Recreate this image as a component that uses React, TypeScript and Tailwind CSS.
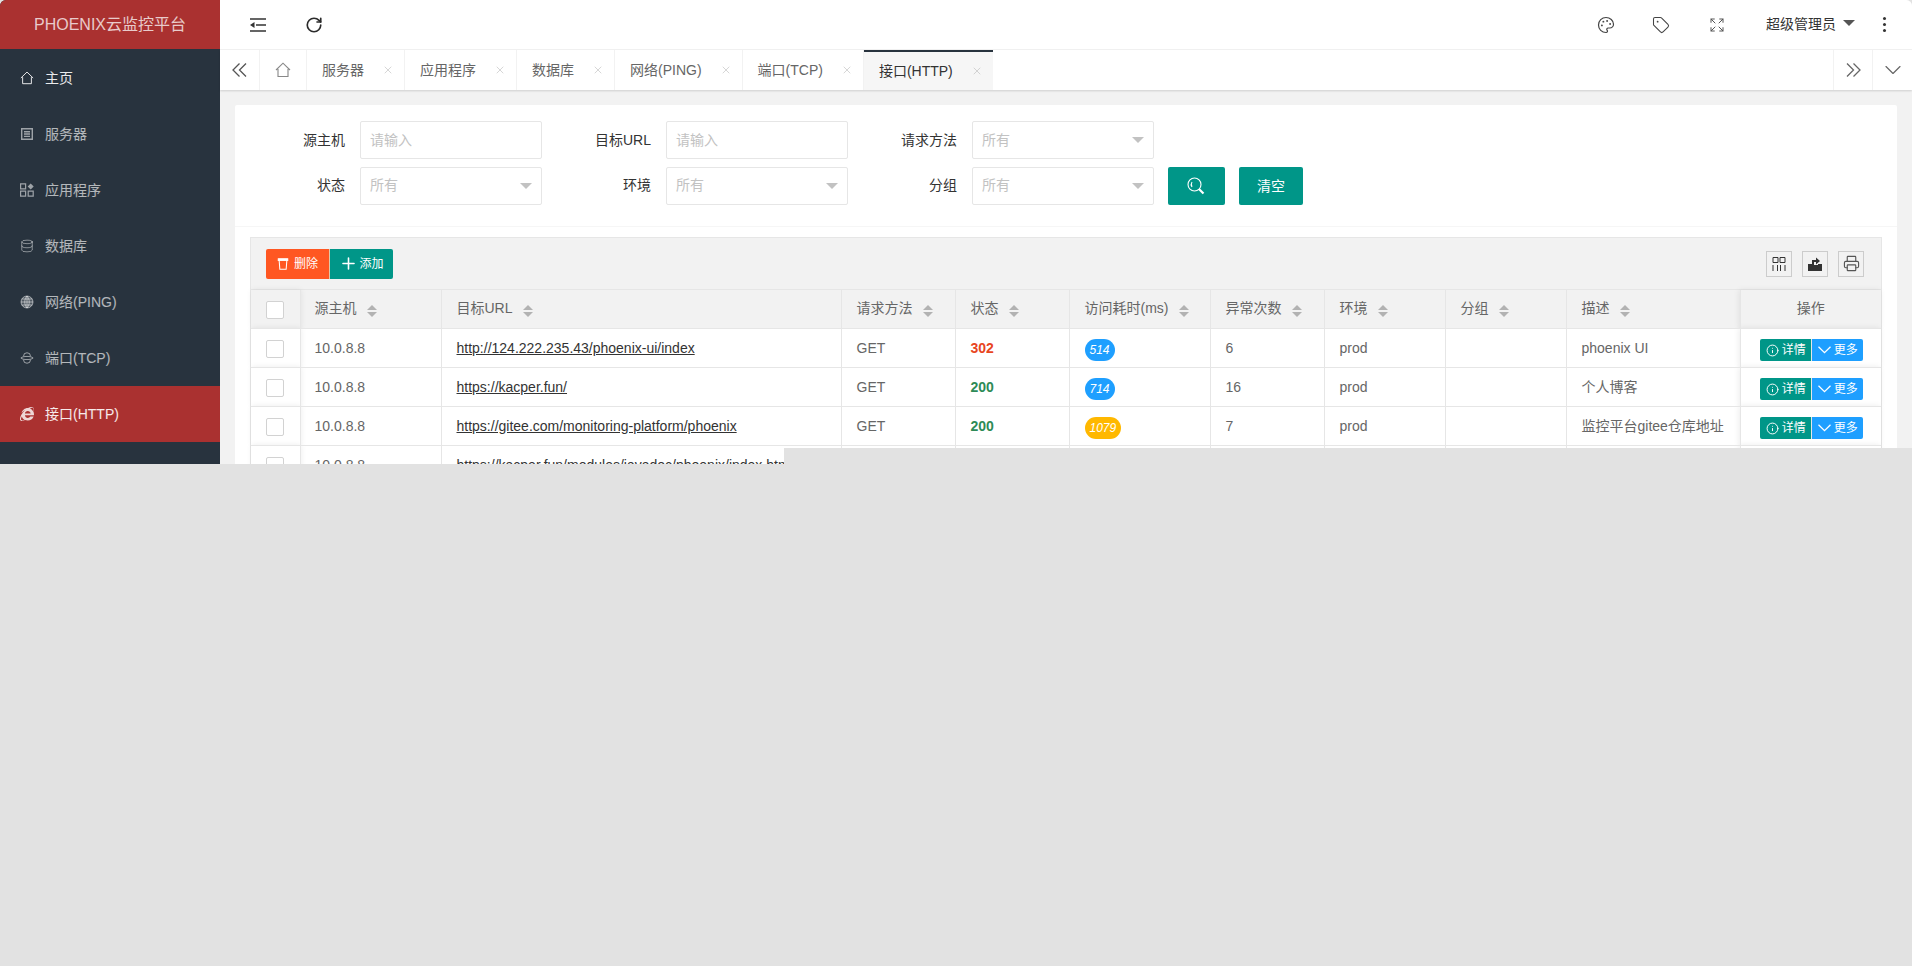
import { ChevronDown, Database, Expand, Info, Palette, Plus, Printer, RotateCw, Tag, X } from 'lucide-react'
import { FaInternetExplorer } from 'react-icons/fa'

const font = "font-['Liberation_Sans','Noto_Sans_CJK_SC',sans-serif]"

const HomeIcon = ({ className = '' }: { className?: string }) => (
  <svg viewBox="0 0 16 16" fill="none" stroke="currentColor" strokeWidth="1.1" className={className}>
    <path d="M1 8 8 1.2 15 8M3 7v7.5h10V7" />
  </svg>
)

const ServerIcon = () => (
  <svg viewBox="0 0 14 14" fill="none" stroke="currentColor" strokeWidth="1.4" className="h-[14px] w-[14px]">
    <path d="M1.7 1.7h10.6v10.6H1.7zM4 4.7h6M4 7h6M4 9.4h6" />
  </svg>
)

const AppIcon = () => (
  <svg viewBox="0 0 14 14" fill="none" stroke="currentColor" strokeWidth="1.2" className="h-[14px] w-[14px]">
    <path d="M.6.9h5v5h-5zM.6 8.2h5v5h-5zM8.2 8.2h5v5h-5z" />
    <path d="m10.7.4 3 3-3 3-3-3z" fill="currentColor" stroke="none" />
  </svg>
)

const GlobeIcon = () => (
  <svg viewBox="0 0 14 14" fill="none" stroke="currentColor" strokeWidth="0.9" className="h-[14px] w-[14px]">
    <circle cx="7" cy="7" r="6" fill="currentColor" fillOpacity="0.35" />
    <path d="M1 7h12M1.8 4h10.4M1.8 10h10.4M7 1v12M7 1C4 4 4 10 7 13M7 1c3 3 3 9 0 12" />
  </svg>
)

const PortIcon = () => (
  <svg viewBox="0 0 16 16" fill="none" stroke="currentColor" strokeWidth="1.1" className="h-[14px] w-[14px]">
    <path d="M4 6a4 4 0 0 1 8 0M4 10a4 4 0 0 0 8 0M1 8c2-2.400 12-2.400 14 0-2 2.400-12 2.400-14 0Z" />
  </svg>
)

const IndentIcon = () => (
  <svg viewBox="0 0 16 14" fill="none" stroke="#333" strokeWidth="1.6" className="h-[14px] w-[16px]">
    <path d="M0 1h16M0 13h16M6 7h10" />
    <path d="M4.500 4v6L0 7z" fill="#333" stroke="none" />
  </svg>
)

const SearchIcon = () => (
  <svg viewBox="0 0 18 18" fill="none" stroke="white" strokeWidth="1.1" className="-ml-[2px] h-[18px] w-[18px]">
    <circle cx="7.500" cy="7.500" r="6.500" />
    <path d="M5 5c-1 1.500-1 3.500 0 5" />
    <path d="m12 12 4.500 4.500" strokeWidth="2.200" />
  </svg>
)

const TrashIcon = () => (
  <svg viewBox="0 0 14 14" fill="none" stroke="white" strokeWidth="1.200" className="h-[12px] w-[12px]">
    <path d="M1 2.500h12M2.500 2.500l.8 10.500h7.400l.8-10.500" />
    <path d="M1.500.8h11v1.700h-11z" fill="white" />
  </svg>
)

const ColsIcon = () => (
  <svg viewBox="0 0 14 14" fill="none" stroke="#333" strokeWidth="1" className="h-[14px] w-[14px]">
    <path d="M1 .5h5v5H1zM8 .5h5v5H8zM1 8v6M5.500 8v6M8.500 8v6M13 8v6" />
  </svg>
)

const ExportIcon = () => (
  <svg viewBox="0 0 14 14" className="h-[14px] w-[14px]" fill="#333">
    <path d="M0 7h4v1h6V7h4v7H0z" />
    <path d="M4 3h4V.500L12 4 8 7.500V5H6v3H4z" />
  </svg>
)

const DoubleLeft = () => (
  <svg viewBox="0 0 15 14" fill="none" stroke="#555" strokeWidth="1.3" className="h-[14px] w-[15px]">
    <path d="M7.500.5 1 7l6.500 6.500M14 .5 7.500 7l6.500 6.500" />
  </svg>
)

const DoubleRight = () => (
  <svg viewBox="0 0 15 14" fill="none" stroke="#666" strokeWidth="1.3" className="h-[14px] w-[15px]">
    <path d="M1 .5 7.500 7 1 13.500M7.500.5 14 7l-6.500 6.500" />
  </svg>
)

const SmallChevron = () => (
  <svg viewBox="0 0 13 8" fill="none" stroke="white" strokeWidth="1.300" className="h-[8px] w-[13px]">
    <path d="m.5.700 6 6 6-6" />
  </svg>
)

const menus = [
  { label: '主页', icon: <HomeIcon className="h-[14px] w-[14px]" />, home: true },
  { label: '服务器', icon: <ServerIcon /> },
  { label: '应用程序', icon: <AppIcon /> },
  { label: '数据库', icon: <Database size={14} strokeWidth={1.4} /> },
  { label: '网络(PING)', icon: <GlobeIcon /> },
  { label: '端口(TCP)', icon: <PortIcon /> },
  { label: '接口(HTTP)', icon: <FaInternetExplorer size={14} />, active: true },
]

const tabs = ['服务器', '应用程序', '数据库', '网络(PING)', '端口(TCP)', '接口(HTTP)']

const columns = [
  { title: '源主机', width: 141 },
  { title: '目标URL', width: 400 },
  { title: '请求方法', width: 114 },
  { title: '状态', width: 114 },
  { title: '访问耗时(ms)', width: 141 },
  { title: '异常次数', width: 114 },
  { title: '环境', width: 121 },
  { title: '分组', width: 121 },
  { title: '描述', width: 174 },
]

const rows = [
  { url: 'http://124.222.235.43/phoenix-ui/index', status: '302', time: '514', errors: '6', desc: 'phoenix UI' },
  { url: 'https://kacper.fun/', status: '200', time: '714', errors: '16', desc: '个人博客' },
  { url: 'https://gitee.com/monitoring-platform/phoenix', status: '200', time: '1079', errors: '7', desc: '监控平台gitee仓库地址' },
  { url: 'https://kacper.fun/modules/javadoc/phoenix/index.html', status: '200', time: '514', errors: '3', desc: 'Javadoc' },
]

const Caret = () => <span className="h-0 w-0 border-x-[6px] border-t-[6px] border-x-transparent border-t-[#c2c2c2]" />

const Sort = () => (
  <span className="ml-[10px] inline-flex translate-y-[1px] flex-col gap-[2px] align-middle">
    <span className="h-0 w-0 border-x-[5px] border-b-[5px] border-x-transparent border-b-[#b2b2b2]" />
    <span className="h-0 w-0 border-x-[5px] border-t-[5px] border-x-transparent border-t-[#b2b2b2]" />
  </span>
)

const Check = () => <span className="block h-[18px] w-[18px] translate-y-[1px] rounded-[2px] border border-[#d2d2d2] bg-white" />

const Field = ({ label, text, select }: { label: string; text: string; select?: boolean }) => (
  <div className="flex w-[306px] flex-none items-center">
    <label className="w-[125px] flex-none pr-[15px] text-right text-[#333]">{label}</label>
    <div className="flex h-[38px] w-[182px] flex-none items-center justify-between rounded-[2px] border border-[#e6e6e6] bg-white pl-[9px] pr-[9px] text-[#c2c2c2]">
      {text}
      {select && <Caret />}
    </div>
  </div>
)

const ToolBtn = ({ children }: { children: React.ReactNode }) => (
  <span className="flex h-[26px] w-[26px] items-center justify-center border border-[#ccc]">{children}</span>
)

export default function App() {
  return (
    <div className={`relative h-[966px] overflow-hidden bg-[#e2e2e2] text-[14px] ${font}`}>
      <div className="flex h-[464px] overflow-hidden rounded-t-[6px] bg-[#f2f2f2]">
        {/* Sidebar */}
        <aside className="w-[220px] flex-none bg-[#28333e]">
          <div className="flex h-[49px] items-center justify-center bg-[#aa3130] text-[16px] text-white/75">PHOENIX云监控平台</div>
          <nav className="pt-px">
            {menus.map(m => (
              <div
                key={m.label}
                className={`flex h-[56px] items-center gap-[11px] pl-[20px] ${
                  m.active ? 'bg-[#aa3130] text-white/80' : m.home ? 'text-white/90' : 'text-white/55'
                }`}
              >
                <span className="flex w-[14px] justify-center">{m.icon}</span>
                <span className={m.home || m.active ? 'text-white/90' : 'text-white/65'}>{m.label}</span>
              </div>
            ))}
          </nav>
        </aside>

        <main className="min-w-0 flex-1">
          {/* Top bar */}
          <header className="flex h-[50px] items-center border-b border-[#f2f2f2] bg-white pl-[30px] pr-[26px] text-[#333]">
            <IndentIcon />
            <RotateCw size={18} strokeWidth={2.2} className="ml-[39px] text-[#2b2b2b]" />
            <div className="ml-auto flex items-center text-[#444]">
              <Palette size={18} strokeWidth={1.6} />
              <Tag size={18} strokeWidth={1.4} className="ml-[37px]" />
              <Expand size={16} strokeWidth={1.5} className="ml-[39px] text-[#555]" />
              <span className="ml-[41px] text-[#333]">超级管理员</span>
              <span className="ml-[7px] h-0 w-0 -translate-y-[2px] border-x-[6px] border-t-[6px] border-x-transparent border-t-[#555]" />
              <div className="ml-[28px] flex flex-col gap-[3px]">
                <span className="h-[3px] w-[3px] rounded-full bg-[#333]" />
                <span className="h-[3px] w-[3px] rounded-full bg-[#333]" />
                <span className="h-[3px] w-[3px] rounded-full bg-[#333]" />
              </div>
            </div>
          </header>

          {/* Tabs */}
          <div className="flex h-[40px] items-stretch bg-white text-[#666] shadow-[0_1px_2px_rgba(0,0,0,0.15)]">
            <button className="flex w-[40px] items-center justify-center border-r border-[#f2f2f2]">
              <DoubleLeft />
            </button>
            <button className="flex w-[47px] items-center justify-center border-r border-[#f2f2f2]">
              <HomeIcon className="h-[16px] w-[16px] text-[#888]" />
            </button>
            {tabs.map((t, i) => {
              const active = i === tabs.length - 1
              return (
                <div
                  key={t}
                  className={`flex items-center pl-[15px] pr-[10px] ${
                    active ? 'border-t-2 border-[#28333e] bg-[#f6f6f6] text-[#333]' : 'border-r border-[#f2f2f2]'
                  }`}
                >
                  {t}
                  <X size={12} strokeWidth={1.2} className="ml-[18px] text-[#bbb]" />
                </div>
              )
            })}
            <button className="ml-auto flex w-[39px] items-center justify-center border-l border-[#f2f2f2]">
              <DoubleRight />
            </button>
            <button className="flex w-[40px] items-center justify-center border-l border-[#f2f2f2]">
              <ChevronDown size={28} strokeWidth={1} className="text-[#666]" />
            </button>
          </div>

          <div className="p-[15px]">
            <section className="rounded-t-[2px] bg-white">
              {/* Search form */}
              <div className="flex flex-col gap-[7px] border-b border-[#f6f6f6] pb-[21px] pt-[16px]">
                <div className="flex">
                  <Field label="源主机" text="请输入" />
                  <Field label="目标URL" text="请输入" />
                  <Field label="请求方法" text="所有" select />
                </div>
                <div className="flex">
                  <Field label="状态" text="所有" select />
                  <Field label="环境" text="所有" select />
                  <Field label="分组" text="所有" select />
                  <button className="ml-[15px] mt-px flex h-[38px] w-[57px] flex-none items-center justify-center rounded-[2px] bg-[#009688]">
                    <SearchIcon />
                  </button>
                  <button className="ml-[14px] mt-px h-[38px] w-[64px] flex-none rounded-[2px] bg-[#009688] text-white">清空</button>
                </div>
              </div>

              {/* Table */}
              <div className="mx-[15px] mt-[10px] border border-[#e6e6e6]">
                <div className="flex h-[52px] items-center justify-between border-b border-[#e6e6e6] bg-[#f2f2f2] pl-[15px] pr-[17px]">
                  <div className="flex text-[12px] text-white">
                    <button className="flex h-[30px] w-[64px] items-center justify-center gap-[5px] rounded-l-[2px] border-r border-[#e0c8a8] bg-[#ff5722]">
                      <TrashIcon />
                      删除
                    </button>
                    <button className="flex h-[30px] w-[63px] items-center justify-center gap-[1px] rounded-r-[2px] bg-[#009688]">
                      <Plus size={19} strokeWidth={2} />
                      添加
                    </button>
                  </div>
                  <div className="flex gap-[10px]">
                    <ToolBtn>
                      <ColsIcon />
                    </ToolBtn>
                    <ToolBtn>
                      <ExportIcon />
                    </ToolBtn>
                    <ToolBtn>
                      <Printer size={17} strokeWidth={1.6} className="text-[#555]" />
                    </ToolBtn>
                  </div>
                </div>

                <table className="w-full table-fixed border-collapse text-[#666]">
                  <colgroup>
                    <col className="w-[49px]" />
                    {columns.map(c => (
                      <col key={c.title} style={{ width: c.width }} />
                    ))}
                    <col />
                  </colgroup>
                  <thead>
                    <tr className="h-[38px] border-b border-[#e6e6e6] bg-[#f2f2f2]">
                      <th className="pl-[15px] shadow-[1px_0_6px_rgba(0,0,0,0.08)]">
                        <Check />
                      </th>
                      {columns.map((c, i) => (
                        <th key={c.title} className={`border-l border-[#e6e6e6] text-left font-normal ${i === 0 ? 'pl-[14px]' : 'pl-[15px]'}`}>
                          {c.title}
                          <Sort />
                        </th>
                      ))}
                      <th className="border-l border-[#e6e6e6] text-center font-normal shadow-[-1px_0_6px_rgba(0,0,0,0.08)]">操作</th>
                    </tr>
                  </thead>
                  <tbody className="[&_td]:pt-px">
                    {rows.map(r => (
                      <tr key={r.url} className="h-[39px] border-b border-[#e6e6e6] bg-white">
                        <td className="pl-[15px] shadow-[1px_0_6px_rgba(0,0,0,0.08)]">
                          <Check />
                        </td>
                        <td className="border-l border-[#e6e6e6] pl-[14px]">10.0.8.8</td>
                        <td className="truncate border-l border-[#e6e6e6] pl-[15px]">
                          <a className="text-[#333] underline">{r.url}</a>
                        </td>
                        <td className="border-l border-[#e6e6e6] pl-[15px]">GET</td>
                        <td className={`border-l border-[#e6e6e6] pl-[15px] font-bold ${r.status === '302' ? 'text-[#e8451e]' : 'text-[#2e8b57]'}`}>
                          {r.status}
                        </td>
                        <td className="border-l border-[#e6e6e6] pl-[15px]">
                          <span
                            className={`inline-flex h-[22px] translate-y-[2px] items-center rounded-full px-[5px] text-[12px] italic text-white ${
                              r.time === '1079' ? 'bg-[#ffb800]' : 'bg-[#1e9fff]'
                            }`}
                          >
                            {r.time}
                          </span>
                        </td>
                        <td className="border-l border-[#e6e6e6] pl-[15px]">{r.errors}</td>
                        <td className="border-l border-[#e6e6e6] pl-[15px]">prod</td>
                        <td className="border-l border-[#e6e6e6]" />
                        <td className="truncate border-l border-[#e6e6e6] pl-[15px]">{r.desc}</td>
                        <td className="border-l border-[#e6e6e6] shadow-[-1px_0_6px_rgba(0,0,0,0.08)]">
                          <div className="flex translate-x-[1px] translate-y-[2px] justify-center text-[12px] text-white">
                            <span className="flex h-[22px] w-[52px] items-center justify-center gap-[3px] rounded-l-[2px] border-r border-[#e6e6e6] bg-[#009688]">
                              <Info size={13} strokeWidth={1.8} />
                              详情
                            </span>
                            <span className="flex h-[22px] w-[51px] items-center justify-center gap-[3px] rounded-r-[2px] bg-[#1e9fff]">
                              <SmallChevron />
                              更多
                            </span>
                          </div>
                        </td>
                      </tr>
                    ))}
                  </tbody>
                </table>
              </div>
            </section>
          </div>
        </main>
      </div>
      {/* unpainted part of the page lies over the lower right of the table */}
      <div className="absolute bottom-0 left-[784px] right-0 top-[448px] bg-[#e2e2e2]" />
    </div>
  )
}
